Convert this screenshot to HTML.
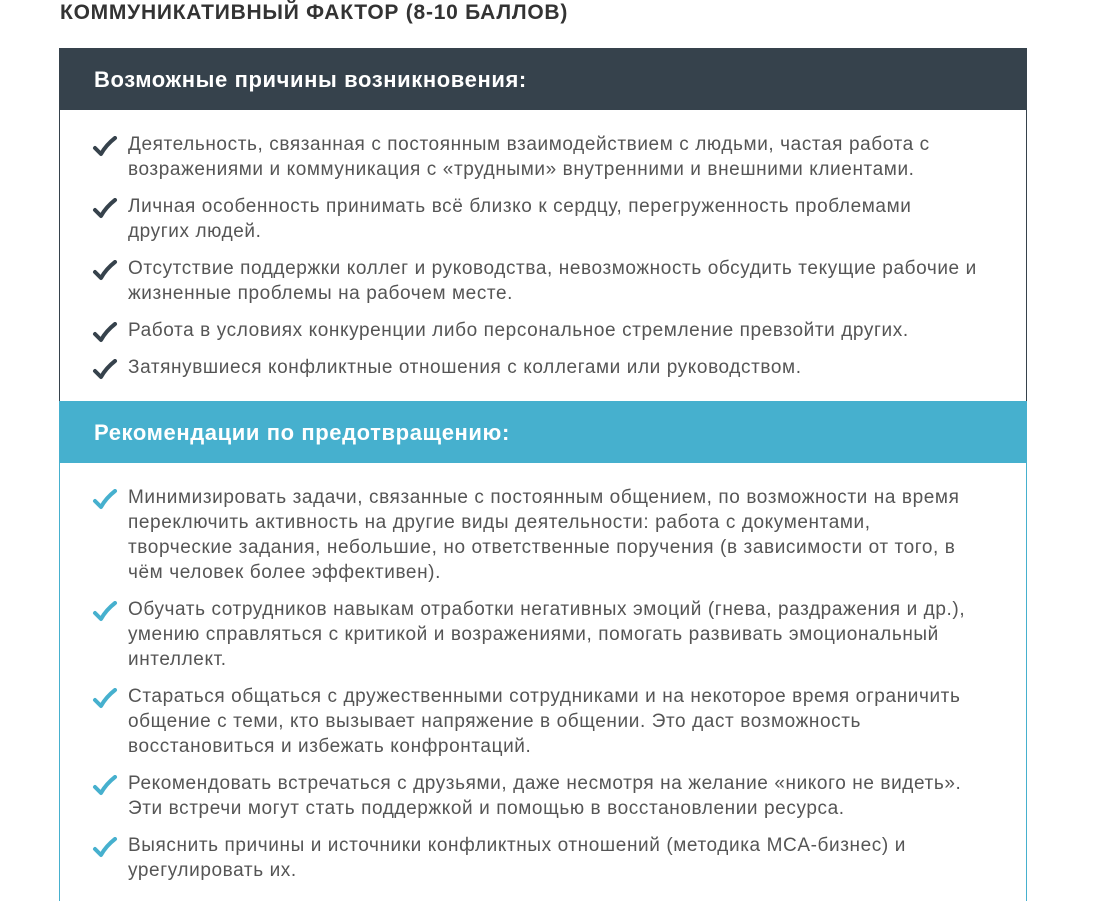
<!DOCTYPE html>
<html><head><meta charset="utf-8"><style>
body{margin:0;background:#fff;font-family:"Liberation Sans",Arial,sans-serif;width:1096px;height:886px;overflow:hidden;position:relative}
h1{position:absolute;left:60px;top:1px;margin:0;font-size:21px;font-weight:bold;color:#333;letter-spacing:0.75px}
.box{position:absolute;left:59px;width:966px;border:1px solid #36424c;border-top:none;border-bottom:none}
.b1{top:48px;height:353px}
.b2{top:401px;height:500px;border-color:#46b0ce}
.hd{height:62px;color:#fff;font-size:22px;font-weight:bold;line-height:64px;box-sizing:border-box;letter-spacing:0.6px}
.b1 .hd{background:#36424c;margin:0 -1px;padding-left:35px}
.b2 .hd{background:#46b0ce;margin:0 -1px;padding-left:35px}
ul{list-style:none;margin:0;padding:22px 0 0 68px}
li{position:relative;font-size:19px;line-height:25px;color:#555;margin-bottom:12px;white-space:nowrap;letter-spacing:0.6px}
li svg{position:absolute;left:-36px;top:4px}
</style></head><body>
<h1>КОММУНИКАТИВНЫЙ ФАКТОР (8-10 БАЛЛОВ)</h1>
<div class="box b1"><div class="hd">Возможные причины возникновения:</div>
<ul>
<li><svg width="26" height="22" viewBox="0 0 26 22"><path d="M3 12 L9 18 Q14 9 23 2" fill="none" stroke="#36424c" stroke-width="4" stroke-linecap="round" stroke-linejoin="round"/></svg>Деятельность, связанная с постоянным взаимодействием с людьми, частая работа с<br>возражениями и коммуникация с «трудными» внутренними и внешними клиентами.</li>
<li><svg width="26" height="22" viewBox="0 0 26 22"><path d="M3 12 L9 18 Q14 9 23 2" fill="none" stroke="#36424c" stroke-width="4" stroke-linecap="round" stroke-linejoin="round"/></svg>Личная особенность принимать всё близко к сердцу, перегруженность проблемами<br>других людей.</li>
<li><svg width="26" height="22" viewBox="0 0 26 22"><path d="M3 12 L9 18 Q14 9 23 2" fill="none" stroke="#36424c" stroke-width="4" stroke-linecap="round" stroke-linejoin="round"/></svg>Отсутствие поддержки коллег и руководства, невозможность обсудить текущие рабочие и<br>жизненные проблемы на рабочем месте.</li>
<li><svg width="26" height="22" viewBox="0 0 26 22"><path d="M3 12 L9 18 Q14 9 23 2" fill="none" stroke="#36424c" stroke-width="4" stroke-linecap="round" stroke-linejoin="round"/></svg>Работа в условиях конкуренции либо персональное стремление превзойти других.</li>
<li><svg width="26" height="22" viewBox="0 0 26 22"><path d="M3 12 L9 18 Q14 9 23 2" fill="none" stroke="#36424c" stroke-width="4" stroke-linecap="round" stroke-linejoin="round"/></svg>Затянувшиеся конфликтные отношения с коллегами или руководством.</li>
</ul></div>
<div class="box b2"><div class="hd">Рекомендации по предотвращению:</div>
<ul style="padding-top:22px">
<li><svg width="26" height="22" viewBox="0 0 26 22"><path d="M3 12 L9 18 Q14 9 23 2" fill="none" stroke="#46b0ce" stroke-width="4" stroke-linecap="round" stroke-linejoin="round"/></svg>Минимизировать задачи, связанные с постоянным общением, по возможности на время<br>переключить активность на другие виды деятельности: работа с документами,<br>творческие задания, небольшие, но ответственные поручения (в зависимости от того, в<br>чём человек более эффективен).</li>
<li><svg width="26" height="22" viewBox="0 0 26 22"><path d="M3 12 L9 18 Q14 9 23 2" fill="none" stroke="#46b0ce" stroke-width="4" stroke-linecap="round" stroke-linejoin="round"/></svg>Обучать сотрудников навыкам отработки негативных эмоций (гнева, раздражения и др.),<br>умению справляться с критикой и возражениями, помогать развивать эмоциональный<br>интеллект.</li>
<li><svg width="26" height="22" viewBox="0 0 26 22"><path d="M3 12 L9 18 Q14 9 23 2" fill="none" stroke="#46b0ce" stroke-width="4" stroke-linecap="round" stroke-linejoin="round"/></svg>Стараться общаться с дружественными сотрудниками и на некоторое время ограничить<br>общение с теми, кто вызывает напряжение в общении. Это даст возможность<br>восстановиться и избежать конфронтаций.</li>
<li><svg width="26" height="22" viewBox="0 0 26 22"><path d="M3 12 L9 18 Q14 9 23 2" fill="none" stroke="#46b0ce" stroke-width="4" stroke-linecap="round" stroke-linejoin="round"/></svg>Рекомендовать встречаться с друзьями, даже несмотря на желание «никого не видеть».<br>Эти встречи могут стать поддержкой и помощью в восстановлении ресурса.</li>
<li><svg width="26" height="22" viewBox="0 0 26 22"><path d="M3 12 L9 18 Q14 9 23 2" fill="none" stroke="#46b0ce" stroke-width="4" stroke-linecap="round" stroke-linejoin="round"/></svg>Выяснить причины и источники конфликтных отношений (методика MCA-бизнес) и<br>урегулировать их.</li>
</ul></div>
</body></html>
